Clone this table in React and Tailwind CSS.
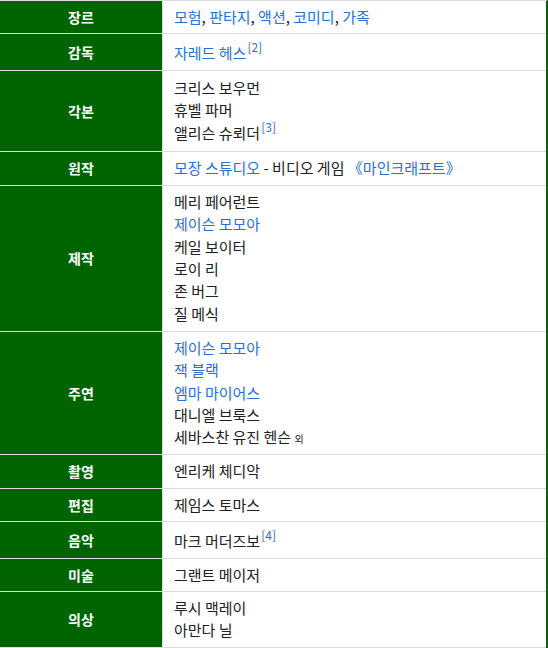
const L = ({ children }) => <span className="text-[#2a6fd6]">{children}</span>

const Ref = ({ n }) => (
  <span className="relative -top-[7px] ml-[1px] text-[12px] leading-none text-[#2a6fd6]">[{n}]</span>
)

const rows = [
  {
    label: "장르",
    pad: "pt-[5px] pb-[4.6px]",
    lines: [
      <>
        <L>모험</L>, <L>판타지</L>, <L>액션</L>, <L>코미디</L>, <L>가족</L>
      </>,
    ],
  },
  { label: "감독", pad: "pt-[8px] pb-[5.6px]", lines: [<><L>자레드 헤스</L><Ref n={2} /></>] },
  {
    label: "각본",
    pad: "pt-[6px] pb-[6.8px]",
    lines: ["크리스 보우먼", "휴벨 파머", <>앨리슨 슈뢰더<Ref n={3} /></>],
  },
  {
    label: "원작",
    pad: "pt-[5px] pb-[5.6px]",
    lines: [
      <>
        <L>모장 스튜디오</L> - 비디오 게임 <L>《마인크래프트》</L>
      </>,
    ],
  },
  {
    label: "제작",
    pad: "pt-[5px] pb-[5.6px]",
    lines: ["메리 페어런트", <L>제이슨 모모아</L>, "케일 보이터", "로이 리", "존 버그", "질 메식"],
  },
  {
    label: "주연",
    pad: "pt-[5px] pb-[5px]",
    lines: [
      <L>제이슨 모모아</L>,
      <L>잭 블랙</L>,
      <L>엠마 마이어스</L>,
      "대니엘 브룩스",
      <>
        세바스찬 유진 헨슨 <span className="text-[10px]">외</span>
      </>,
    ],
  },
  { label: "촬영", pad: "pt-[5px] pb-[5.6px]", lines: ["엔리케 체디악"] },
  { label: "편집", pad: "pt-[5px] pb-[4.6px]", lines: ["제임스 토마스"] },
  { label: "음악", pad: "pt-[8px] pb-[5.6px]", lines: [<>마크 머더즈보<Ref n={4} /></>] },
  { label: "미술", pad: "pt-[5px] pb-[4.6px]", lines: ["그랜트 메이저"] },
  { label: "의상", pad: "pt-[5px] pb-[5.2px]", lines: ["루시 맥레이", "아만다 닐"] },
]

export default function App() {
  return (
    <div
      className="w-[548px] bg-white text-[15px] leading-[22.4px] text-[#202122]"
      style={{ fontFamily: '"Noto Sans CJK KR", "Noto Sans", sans-serif' }}
    >
      <div className="border-t border-[#dcdcdc] border-r-2 border-r-[#006400]">
        {rows.map((row) => (
          <div key={row.label} className="flex border-b border-[#dcdcdc]">
            <div className="w-[163px] shrink-0 bg-[#006400] text-white text-[14px] font-bold flex items-center justify-center border-r border-[#dcdcdc]">
              {row.label}
            </div>
            <div className={`flex-1 pl-[11px] pr-2 ${row.pad}`}>
              {row.lines.map((line, i) => (
                <div key={i} className="h-[22.4px] whitespace-nowrap">
                  {line}
                </div>
              ))}
            </div>
          </div>
        ))}
      </div>
    </div>
  )
}
